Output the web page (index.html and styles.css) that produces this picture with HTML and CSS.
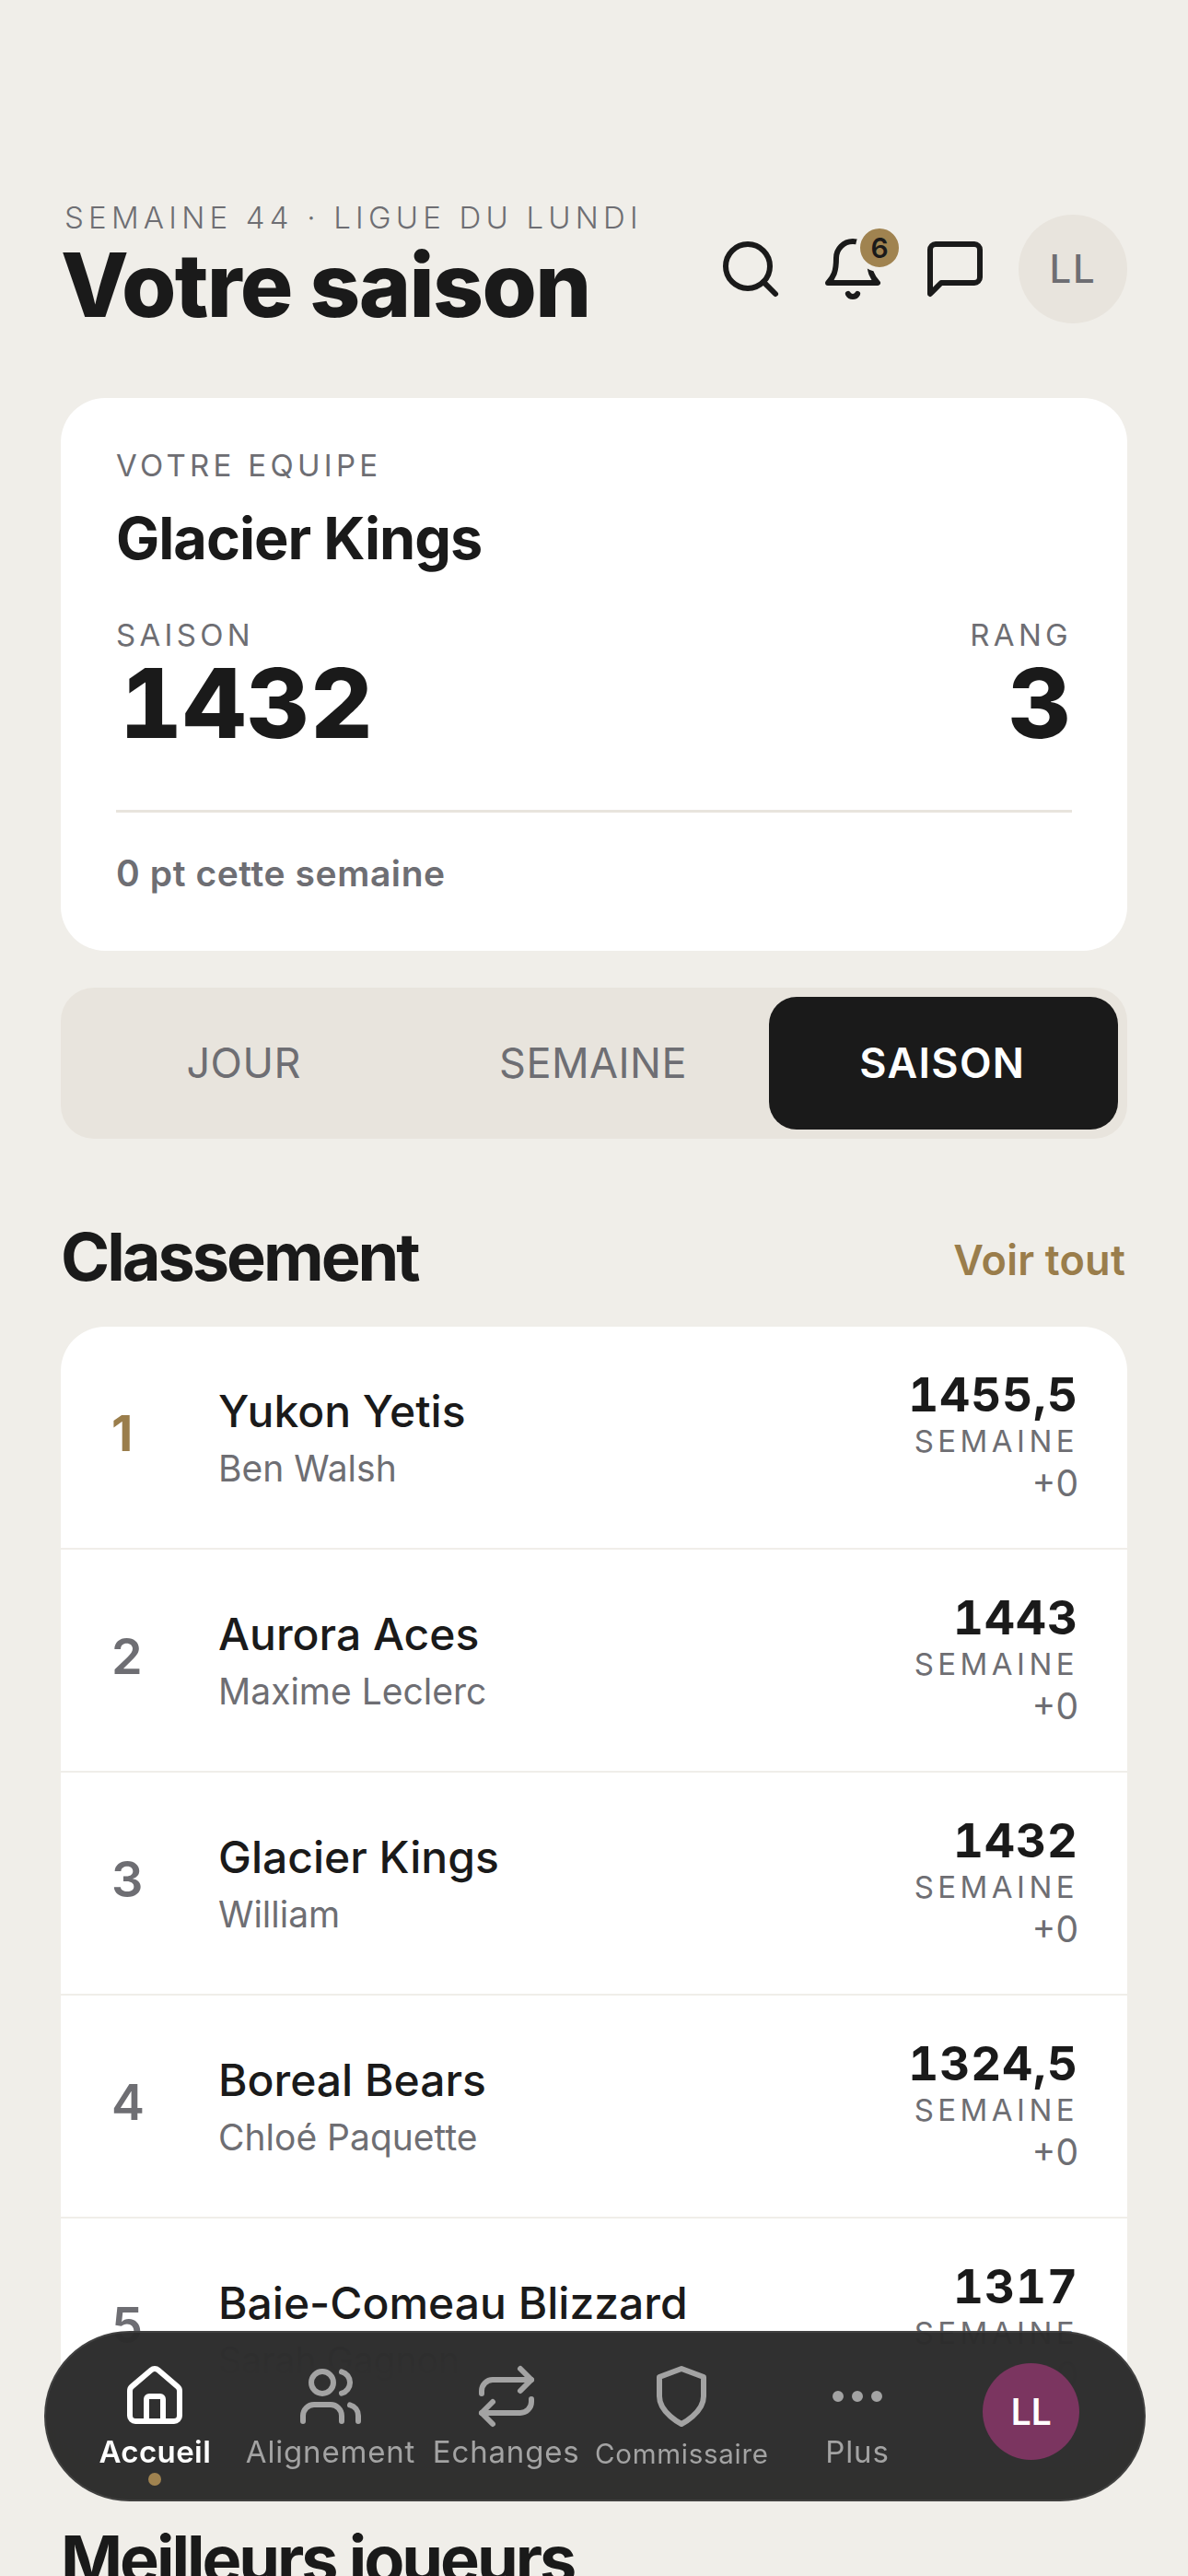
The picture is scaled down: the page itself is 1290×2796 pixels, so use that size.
FILE: index.html
```html
<!DOCTYPE html>
<html lang="fr">

<head>
    <meta charset="UTF-8">
    <meta name="viewport" content="width=device-width, initial-scale=1.0">
    <title>Votre saison</title>
    <link rel="stylesheet" href="styles.css">
</head>

<body>
    <div class="screen">
        <header class="top-bar">
            <div class="top-titles">
                <div class="eyebrow">SEMAINE 44 · LIGUE DU LUNDI</div>
                <h1>Votre saison</h1>
            </div>
            <div class="top-actions">
                <svg class="icon" viewBox="0 0 24 24">
                    <circle cx="11" cy="11" r="8" />
                    <path d="m21 21-4.35-4.35" />
                </svg>
                <div class="bell">
                    <svg class="icon" viewBox="0 0 24 24">
                        <path d="M6 8a6 6 0 0 1 12 0c0 5 1 7 3 9H3c2-2 3-4 3-9" />
                        <path d="M10.3 21a1.94 1.94 0 0 0 3.4 0" />
                    </svg>
                    <span class="badge">6</span>
                </div>
                <svg class="icon" viewBox="0 0 24 24">
                    <path d="M21 15a2 2 0 0 1-2 2H7l-4 4V5a2 2 0 0 1 2-2h14a2 2 0 0 1 2 2z" />
                </svg>
                <div class="avatar">LL</div>
            </div>
        </header>

        <section class="team-card">
            <div class="label">VOTRE EQUIPE</div>
            <div class="team-name">Glacier Kings</div>
            <div class="team-stats">
                <div>
                    <div class="label">SAISON</div>
                    <div class="big-number">1432</div>
                </div>
                <div class="stat-right">
                    <div class="label">RANG</div>
                    <div class="big-number">3</div>
                </div>
            </div>
            <div class="team-foot">0 pt cette semaine</div>
        </section>

        <div class="tabs">
            <div class="tab">JOUR</div>
            <div class="tab">SEMAINE</div>
            <div class="tab tab-active">SAISON</div>
        </div>

        <div class="section-head">
            <h2>Classement</h2>
            <span class="see-all">Voir tout</span>
        </div>

        <div class="rank-list">
            <div class="rank-row">
                <div class="rank rank-first">1</div>
                <div class="team">
                    <div class="team-title">Yukon Yetis</div>
                    <div class="owner">Ben Walsh</div>
                </div>
                <div class="score">
                    <div class="points">1455,5</div>
                    <div class="week-label">SEMAINE</div>
                    <div class="week-points">+0</div>
                </div>
            </div>
            <div class="rank-row">
                <div class="rank">2</div>
                <div class="team">
                    <div class="team-title">Aurora Aces</div>
                    <div class="owner">Maxime Leclerc</div>
                </div>
                <div class="score">
                    <div class="points">1443</div>
                    <div class="week-label">SEMAINE</div>
                    <div class="week-points">+0</div>
                </div>
            </div>
            <div class="rank-row">
                <div class="rank">3</div>
                <div class="team">
                    <div class="team-title">Glacier Kings</div>
                    <div class="owner">William</div>
                </div>
                <div class="score">
                    <div class="points">1432</div>
                    <div class="week-label">SEMAINE</div>
                    <div class="week-points">+0</div>
                </div>
            </div>
            <div class="rank-row">
                <div class="rank">4</div>
                <div class="team">
                    <div class="team-title">Boreal Bears</div>
                    <div class="owner">Chloé Paquette</div>
                </div>
                <div class="score">
                    <div class="points">1324,5</div>
                    <div class="week-label">SEMAINE</div>
                    <div class="week-points">+0</div>
                </div>
            </div>
            <div class="rank-row">
                <div class="rank">5</div>
                <div class="team">
                    <div class="team-title">Baie-Comeau Blizzard</div>
                    <div class="owner">Sarah Gagnon</div>
                </div>
                <div class="score">
                    <div class="points">1317</div>
                    <div class="week-label">SEMAINE</div>
                    <div class="week-points">+0</div>
                </div>
            </div>
        </div>

        <div class="section-head">
            <h2>Meilleurs joueurs</h2>
        </div>

        <nav class="tab-bar">
            <div class="nav-item nav-active">
                <svg class="icon" viewBox="0 0 24 24">
                    <path d="M15 21v-8a1 1 0 0 0-1-1h-4a1 1 0 0 0-1 1v8" />
                    <path d="M3 10a2 2 0 0 1 .709-1.528l7-5.999a2 2 0 0 1 2.582 0l7 5.999A2 2 0 0 1 21 10v9a2 2 0 0 1-2 2H5a2 2 0 0 1-2-2z" />
                </svg>
                <span class="nav-label">Accueil</span>
                <span class="nav-dot"></span>
            </div>
            <div class="nav-item">
                <svg class="icon" viewBox="0 0 24 24">
                    <path d="M16 21v-2a4 4 0 0 0-4-4H6a4 4 0 0 0-4 4v2" />
                    <circle cx="9" cy="7" r="4" />
                    <path d="M22 21v-2a4 4 0 0 0-3-3.87" />
                    <path d="M16 3.13a4 4 0 0 1 0 7.75" />
                </svg>
                <span class="nav-label">Alignement</span>
            </div>
            <div class="nav-item">
                <svg class="icon" viewBox="0 0 24 24">
                    <path d="m17 2 4 4-4 4" />
                    <path d="M3 11v-1a4 4 0 0 1 4-4h14" />
                    <path d="m7 22-4-4 4-4" />
                    <path d="M21 13v1a4 4 0 0 1-4 4H3" />
                </svg>
                <span class="nav-label">Echanges</span>
            </div>
            <div class="nav-item">
                <svg class="icon" viewBox="0 0 24 24">
                    <path d="M12 22s8-4 8-10V5l-8-3-8 3v7c0 6 8 10 8 10z" />
                </svg>
                <span class="nav-label nav-label-small">Commissaire</span>
            </div>
            <div class="nav-item">
                <svg class="icon" viewBox="0 0 24 24">
                    <circle cx="5" cy="12" r="1" />
                    <circle cx="12" cy="12" r="1" />
                    <circle cx="19" cy="12" r="1" />
                </svg>
                <span class="nav-label">Plus</span>
            </div>
            <div class="nav-item nav-profile">
                <div class="nav-avatar">LL</div>
            </div>
        </nav>
    </div>
</body>

</html>
```

FILE: styles.css
```css
* {
    box-sizing: border-box;
}

html,
body {
    margin: 0;
    padding: 0;
}

body {
    font-family: Inter, 'Liberation Sans', sans-serif;
    background-color: #f0eee9;
    color: #1a1a1a;
}

.screen {
    position: relative;
    width: 1290px;
    height: 2796px;
    padding: 214px 66px 0;
    overflow: hidden;
}

h1,
h2 {
    margin: 0;
}

.icon {
    display: block;
    width: 72px;
    height: 72px;
    fill: none;
    stroke: currentColor;
    stroke-width: 2;
    stroke-linecap: round;
    stroke-linejoin: round;
}

/* header */
.top-bar {
    display: flex;
    justify-content: space-between;
    align-items: flex-start;
}

.eyebrow {
    font-size: 33px;
    line-height: 44px;
    font-weight: 300;
    letter-spacing: 0.158em;
    color: #6e6e73;
    padding-left: 4px;
}

h1 {
    margin-top: 3px;
    font-size: 96px;
    line-height: 96px;
    font-weight: 800;
    letter-spacing: -0.017em;
}

.top-actions {
    display: flex;
    align-items: center;
    gap: 39px;
    margin-top: 19px;
}

.bell {
    position: relative;
}

.badge {
    position: absolute;
    top: -13px;
    right: -19px;
    width: 52px;
    height: 52px;
    border: 5px solid #f0eee9;
    border-radius: 50%;
    background-color: #a08350;
    font-size: 30px;
    font-weight: 600;
    line-height: 42px;
    text-align: center;
}

.avatar {
    width: 118px;
    height: 118px;
    margin-left: -6px;
    border-radius: 50%;
    background-color: #e8e4dd;
    color: #6e6e73;
    font-size: 42px;
    font-weight: 500;
    line-height: 118px;
    text-align: center;
    letter-spacing: 0.04em;
}

/* team card */
.team-card {
    margin-top: 75px;
    padding: 54px 60px 0;
    height: 600px;
    background: #ffffff;
    border-radius: 48px;
}

.label {
    font-size: 33px;
    line-height: 38px;
    letter-spacing: 0.13em;
    color: #6e6e73;
}

.team-name {
    margin-top: 22px;
    font-size: 63px;
    line-height: 76px;
    font-weight: 700;
    letter-spacing: -1px;
}

.team-stats {
    display: flex;
    justify-content: space-between;
    margin-top: 48px;
    padding-bottom: 68px;
    border-bottom: 3px solid #e8e4dd;
}

.stat-right {
    text-align: right;
}

.big-number {
    margin-top: 7px;
    padding-left: 4px;
    font-size: 105px;
    line-height: 96px;
    font-weight: 800;
    font-variant-numeric: tabular-nums;
    letter-spacing: 0.012em;
}

.team-foot {
    margin-top: 41px;
    font-size: 39px;
    line-height: 50px;
    font-weight: 600;
    letter-spacing: 0.015em;
    color: #6e6e73;
}

/* period tabs */
.tabs {
    display: flex;
    margin-top: 40px;
    padding: 10px;
    height: 164px;
    background-color: #e8e4dd;
    border-radius: 36px;
}

.tab {
    flex: 1;
    display: flex;
    align-items: center;
    justify-content: center;
    padding: 0 2px 2px 0;
    border-radius: 30px;
    font-size: 45px;
    letter-spacing: 0.01em;
    color: #6e6e73;
}

.tab-active {
    background-color: #1a1a1a;
    color: #ffffff;
    font-weight: 600;
    letter-spacing: 0.03em;
}

/* sections */
.section-head {
    display: flex;
    justify-content: space-between;
    align-items: center;
    margin-top: 86px;
    height: 84px;
}

h2 {
    font-size: 72px;
    line-height: 84px;
    font-weight: 700;
    letter-spacing: -0.042em;
}

.see-all {
    padding: 6px 2px 0 0;
    font-size: 45px;
    font-weight: 600;
    letter-spacing: 0.005em;
    color: #9a7d4b;
}

/* ranking list */
.rank-list {
    margin-top: 34px;
    background: #ffffff;
    border-radius: 48px;
    overflow: hidden;
}

.rank-row {
    display: flex;
    align-items: center;
    height: 242px;
    padding: 0 53px 0 55px;
    border-bottom: 2px solid #f0eee9;
}

.rank {
    width: 116px;
    padding-bottom: 10px;
    font-size: 54px;
    font-weight: 600;
    color: #6e6e73;
}

.rank-first {
    font-weight: 700;
    color: #9a7d4b;
}

.team {
    flex: 1;
}

.team-title {
    font-size: 48px;
    line-height: 64px;
    font-weight: 550;
}

.owner {
    margin-top: 4px;
    font-size: 39px;
    line-height: 52px;
    color: #6e6e73;
}

.score {
    text-align: right;
}

.points {
    font-size: 51px;
    line-height: 60px;
    font-weight: 700;
    font-variant-numeric: tabular-nums;
    letter-spacing: 0.02em;
}

.week-label {
    font-size: 33px;
    line-height: 40px;
    letter-spacing: 0.135em;
    color: #6e6e73;
}

.week-points {
    font-size: 39px;
    line-height: 52px;
    color: #6e6e73;
}

/* bottom nav */
.tab-bar {
    position: absolute;
    left: 48px;
    top: 2530px;
    display: flex;
    width: 1196px;
    height: 185px;
    padding: 0 25px;
    background-color: rgba(37, 37, 37, 0.95);
    backdrop-filter: blur(40px);
    border: 2px solid rgba(255, 255, 255, 0.08);
    border-radius: 93px;
    color: #a3a3a3;
}

.nav-item {
    flex: 1;
    position: relative;
    display: flex;
    flex-direction: column;
    align-items: center;
    padding-top: 33px;
}

.nav-label {
    margin-top: 2px;
    font-size: 33px;
    line-height: 44px;
    letter-spacing: 0.025em;
    white-space: nowrap;
}

.nav-label-small {
    margin-top: 4px;
    font-size: 29.5px;
}

.nav-active {
    color: #ffffff;
    margin-left: -2px;
}

.nav-active .nav-label {
    font-weight: 600;
    letter-spacing: 0.012em;
}

.nav-dot {
    position: absolute;
    top: 152px;
    width: 14px;
    height: 14px;
    border-radius: 50%;
    background-color: #a08350;
}

.nav-avatar {
    width: 105px;
    height: 105px;
    margin-right: 4px;
    border-radius: 50%;
    background-color: #7b3560;
    color: #ffffff;
    font-size: 39px;
    font-weight: 600;
    line-height: 105px;
    text-align: center;
}
```
